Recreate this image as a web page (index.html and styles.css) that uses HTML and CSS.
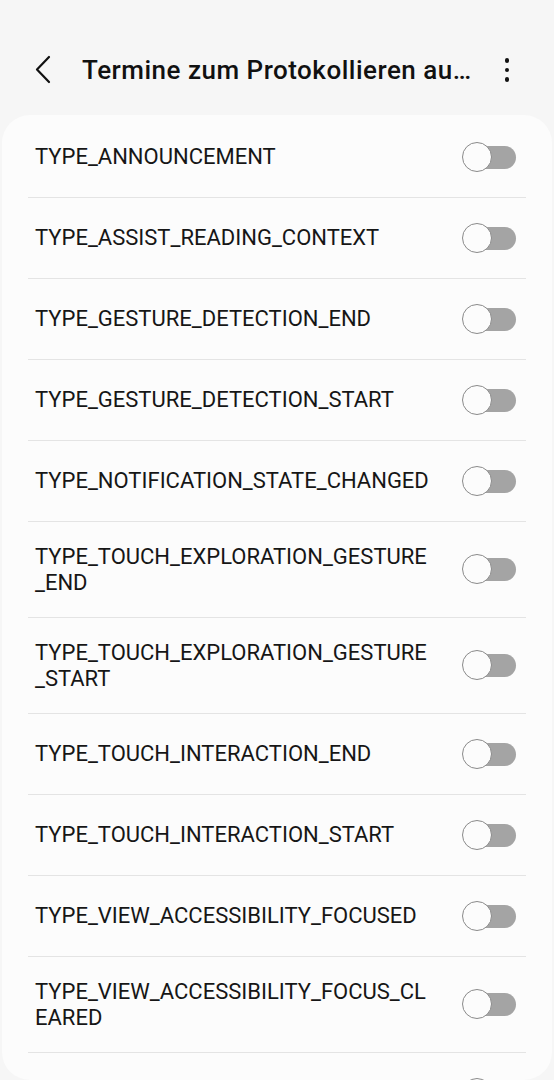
FILE: index.html
```html
<!DOCTYPE html>
<html lang="de">
<head>
  <meta charset="UTF-8" />
  <meta name="viewport" content="width=device-width, initial-scale=1.0"/>
  <title>Termine zum Protokollieren auswählen</title>
  <link rel="stylesheet" href="styles.css">
</head>
<body>
  <div class="app-bar">
    <button class="icon-btn back-btn" aria-label="Zurück">
      <svg width="20" height="30" viewBox="0 0 20 30"><path d="M15 2 L3 14.5 L15 27" fill="none" stroke="#111" stroke-width="2.2" stroke-linecap="round" stroke-linejoin="round"/></svg>
    </button>
    <h1 class="title">Termine zum Protokollieren auswählen</h1>
    <button class="icon-btn more-btn" aria-label="Mehr Optionen">
      <span class="dot"></span><span class="dot"></span><span class="dot"></span>
    </button>
  </div>

  <div class="card">
    <div class="row"><span class="label">TYPE_ANNOUNCEMENT</span><span class="switch"></span></div>
    <div class="row"><span class="label">TYPE_ASSIST_READING_CONTEXT</span><span class="switch"></span></div>
    <div class="row"><span class="label">TYPE_GESTURE_DETECTION_END</span><span class="switch"></span></div>
    <div class="row"><span class="label">TYPE_GESTURE_DETECTION_START</span><span class="switch"></span></div>
    <div class="row"><span class="label">TYPE_NOTIFICATION_STATE_CHANGED</span><span class="switch"></span></div>
    <div class="row two-line"><span class="label">TYPE_TOUCH_EXPLORATION_GESTURE<br>_END</span><span class="switch"></span></div>
    <div class="row two-line"><span class="label">TYPE_TOUCH_EXPLORATION_GESTURE<br>_START</span><span class="switch"></span></div>
    <div class="row"><span class="label">TYPE_TOUCH_INTERACTION_END</span><span class="switch"></span></div>
    <div class="row"><span class="label">TYPE_TOUCH_INTERACTION_START</span><span class="switch"></span></div>
    <div class="row"><span class="label">TYPE_VIEW_ACCESSIBILITY_FOCUSED</span><span class="switch"></span></div>
    <div class="row two-line"><span class="label">TYPE_VIEW_ACCESSIBILITY_FOCUS_CL<br>EARED</span><span class="switch"></span></div>
    <div class="row last"><span class="switch"></span></div>
  </div>
</body>
</html>
```

FILE: styles.css
```css
body {
  margin: 0;
  padding: 0;
  font-family: Roboto, 'Noto Sans', sans-serif;
  background-color: #f6f6f6;
  color: #111;
  overflow: hidden;
}

.app-bar {
  display: flex;
  align-items: center;
  height: 115px;
  padding: 25px 0 0 32px;
  box-sizing: border-box;
}

.icon-btn {
  background: none;
  border: none;
  padding: 0;
  cursor: pointer;
  display: flex;
  align-items: center;
  justify-content: center;
}

.back-btn {
  width: 24px;
  height: 40px;
  margin-right: 26px;
}

.title {
  margin: 0;
  width: 392px;
  font-size: 26px;
  font-weight: 500;
  letter-spacing: 0.5px;
  white-space: nowrap;
  overflow: hidden;
  text-overflow: ellipsis;
}

.more-btn {
  flex-direction: column;
  gap: 5px;
  width: 20px;
  height: 40px;
  margin-left: 23px;
}

.more-btn .dot {
  width: 4.5px;
  height: 4.5px;
  border-radius: 50%;
  background: #111;
}

.card {
  margin: 0 2px;
  background: #fcfcfc;
  border-radius: 28px;
  padding: 2px 26px 0;
  height: 963px;
  overflow: hidden;
}

.row {
  display: flex;
  align-items: center;
  justify-content: space-between;
  height: 80px;
  padding: 0 0 0 7px;
  border-bottom: 1px solid #e4e4e4;
}

.row.two-line {
  height: 95px;
}

.row.last {
  justify-content: flex-end;
  border-bottom: none;
}

.label {
  font-size: 22px;
  line-height: 26px;
  color: #161616;
}

.switch {
  position: relative;
  width: 54px;
  height: 23px;
  margin-right: 10px;
  flex-shrink: 0;
}

.switch::before {
  content: "";
  position: absolute;
  left: 6px;
  right: 0;
  top: 0;
  bottom: 0;
  background: #a4a4a4;
  border-radius: 12px;
}

.switch::after {
  content: "";
  position: absolute;
  left: 0;
  top: -4px;
  width: 28px;
  height: 28px;
  border: 1.5px solid #8a8a8a;
  border-radius: 50%;
  background: #fcfcfc;
}
```
